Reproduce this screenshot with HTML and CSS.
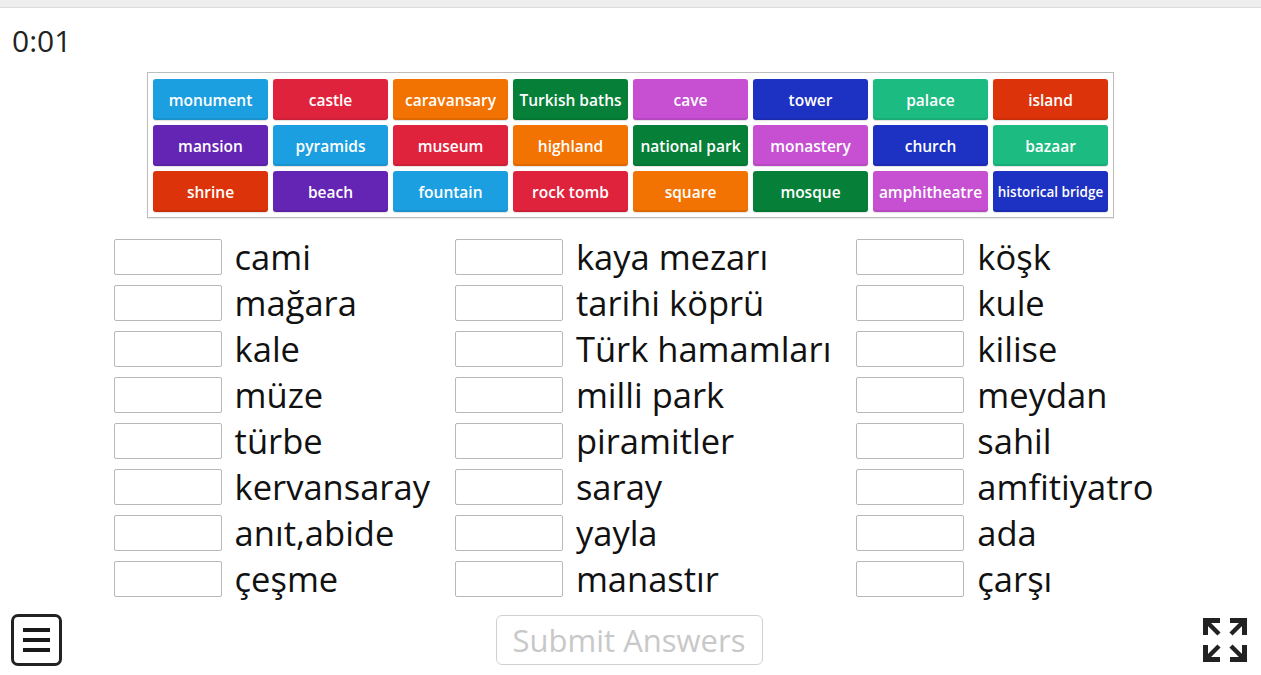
FILE: index.html
```html
<!DOCTYPE html>
<html lang="tr">
<head>
<meta charset="utf-8">
<title>Match</title>
<link rel="stylesheet" href="styles.css">
</head>
<body>
<div class="topstrip"></div>
<div class="timer">0:01</div>
<div class="bank">
  <div class="tile c-blue">monument</div>
  <div class="tile c-red">castle</div>
  <div class="tile c-orange">caravansary</div>
  <div class="tile c-green">Turkish baths</div>
  <div class="tile c-pink">cave</div>
  <div class="tile c-navy">tower</div>
  <div class="tile c-teal">palace</div>
  <div class="tile c-rust">island</div>

  <div class="tile c-purple">mansion</div>
  <div class="tile c-blue">pyramids</div>
  <div class="tile c-red">museum</div>
  <div class="tile c-orange">highland</div>
  <div class="tile c-green">national park</div>
  <div class="tile c-pink">monastery</div>
  <div class="tile c-navy">church</div>
  <div class="tile c-teal">bazaar</div>

  <div class="tile c-rust">shrine</div>
  <div class="tile c-purple">beach</div>
  <div class="tile c-blue">fountain</div>
  <div class="tile c-red">rock tomb</div>
  <div class="tile c-orange">square</div>
  <div class="tile c-green">mosque</div>
  <div class="tile c-pink">amphitheatre</div>
  <div class="tile c-navy small">historical bridge</div>
</div>

<div class="answers">
  <div class="col">
    <div class="row"><span class="slot"></span><span class="word">cami</span></div>
    <div class="row"><span class="slot"></span><span class="word">mağara</span></div>
    <div class="row"><span class="slot"></span><span class="word">kale</span></div>
    <div class="row"><span class="slot"></span><span class="word">müze</span></div>
    <div class="row"><span class="slot"></span><span class="word">türbe</span></div>
    <div class="row"><span class="slot"></span><span class="word">kervansaray</span></div>
    <div class="row"><span class="slot"></span><span class="word">anıt,abide</span></div>
    <div class="row"><span class="slot"></span><span class="word">çeşme</span></div>
  </div>
  <div class="col">
    <div class="row"><span class="slot"></span><span class="word">kaya mezarı</span></div>
    <div class="row"><span class="slot"></span><span class="word">tarihi köprü</span></div>
    <div class="row"><span class="slot"></span><span class="word">Türk hamamları</span></div>
    <div class="row"><span class="slot"></span><span class="word">milli park</span></div>
    <div class="row"><span class="slot"></span><span class="word">piramitler</span></div>
    <div class="row"><span class="slot"></span><span class="word">saray</span></div>
    <div class="row"><span class="slot"></span><span class="word">yayla</span></div>
    <div class="row"><span class="slot"></span><span class="word">manastır</span></div>
  </div>
  <div class="col">
    <div class="row"><span class="slot"></span><span class="word">köşk</span></div>
    <div class="row"><span class="slot"></span><span class="word">kule</span></div>
    <div class="row"><span class="slot"></span><span class="word">kilise</span></div>
    <div class="row"><span class="slot"></span><span class="word">meydan</span></div>
    <div class="row"><span class="slot"></span><span class="word">sahil</span></div>
    <div class="row"><span class="slot"></span><span class="word">amfitiyatro</span></div>
    <div class="row"><span class="slot"></span><span class="word">ada</span></div>
    <div class="row"><span class="slot"></span><span class="word">çarşı</span></div>
  </div>
</div>

<div class="footer">
  <div class="menu-btn">
    <span class="bar"></span><span class="bar"></span><span class="bar"></span>
  </div>
  <div class="submit">Submit Answers</div>
  <div class="fs-btn">
    <svg width="44" height="44" viewBox="0 0 44 44">
      <g fill="#222">
        <polygon points="0,0 17,0 17,5 5,5 5,17 0,17"/>
        <polygon points="44,0 27,0 27,5 39,5 39,17 44,17"/>
        <polygon points="0,44 17,44 17,39 5,39 5,27 0,27"/>
        <polygon points="44,44 27,44 27,39 39,39 39,27 44,27"/>
      </g>
      <g stroke="#222" stroke-width="4.5" stroke-linecap="butt">
        <line x1="3" y1="3" x2="16" y2="16"/>
        <line x1="41" y1="3" x2="28" y2="16"/>
        <line x1="3" y1="41" x2="16" y2="28"/>
        <line x1="41" y1="41" x2="28" y2="28"/>
      </g>
    </svg>
  </div>
</div>
</body>
</html>
```

FILE: styles.css
```css
html, body {
  margin: 0;
  padding: 0;
  background: #fff;
}
body {
  font-family: "Open Sans", "Noto Sans", sans-serif;
  color: #111;
  width: 1261px;
  height: 675px;
  overflow: hidden;
}
.topstrip {
  height: 7px;
  background: #eeeeee;
  border-bottom: 1px solid #dcdcdc;
}
.timer {
  font-size: 30px;
  line-height: 30px;
  padding: 18px 0 0 12px;
  height: 46px;
  color: #222;
}
.bank {
  width: 955px;
  margin: 0 auto;
  padding: 6px 5px 5px 5px;
  border: 1px solid #bdbdbd;
  display: grid;
  grid-template-columns: repeat(8, 115px);
  grid-auto-rows: 41px;
  gap: 5px;
  box-shadow: 0 1px 1px rgba(0,0,0,0.08);
}
.tile {
  border-radius: 3px;
  color: #fff;
  font-weight: 600;
  font-size: 15.5px;
  display: flex;
  align-items: center;
  justify-content: center;
  white-space: nowrap;
  box-shadow: inset 0 -2px 0 rgba(0,0,0,0.08), 0 1px 1px rgba(0,0,0,0.12);
}
.tile.small { font-size: 13.5px; }
.c-blue { background: #1c9fe0; }
.c-red { background: #df233d; }
.c-orange { background: #f27202; }
.c-green { background: #067f38; }
.c-pink { background: #c64fd2; }
.c-navy { background: #1d31c2; }
.c-teal { background: #1cbb81; }
.c-rust { background: #dc330a; }
.c-purple { background: #6425b4; }

.answers {
  display: flex;
  justify-content: center;
  gap: 25px;
  margin-top: 21px;
  padding-left: 6px;
}
.col {
  display: flex;
  flex-direction: column;
  gap: 10px;
}
.row {
  display: flex;
  align-items: center;
  height: 36px;
  gap: 13px;
}
.slot {
  width: 106px;
  height: 34px;
  border: 1px solid #b8b8b8;
  border-radius: 2px;
  background: #fff;
  flex: none;
}
.word {
  font-size: 34.5px;
  line-height: 36px;
  color: #111;
  white-space: nowrap;
}
.footer {
  display: grid;
  grid-template-columns: 1fr auto 1fr;
  align-items: center;
  margin-top: 17px;
  padding: 0 14px 0 11px;
}
.menu-btn {
  justify-self: start;
  width: 45px;
  height: 46px;
  border: 3px solid #222;
  border-radius: 7px;
  display: flex;
  flex-direction: column;
  align-items: center;
  justify-content: center;
  gap: 6px;
}
.bar {
  width: 27px;
  height: 4px;
  background: #1a1a1a;
}
.submit {
  width: 265px;
  height: 48px;
  border: 1px solid #d0d0d0;
  border-radius: 6px;
  color: #c8c8c8;
  font-size: 31px;
  display: flex;
  align-items: center;
  justify-content: center;
}
.fs-btn {
  justify-self: end;
  width: 44px;
  height: 44px;
}
.fs-btn svg { display: block; }
```
